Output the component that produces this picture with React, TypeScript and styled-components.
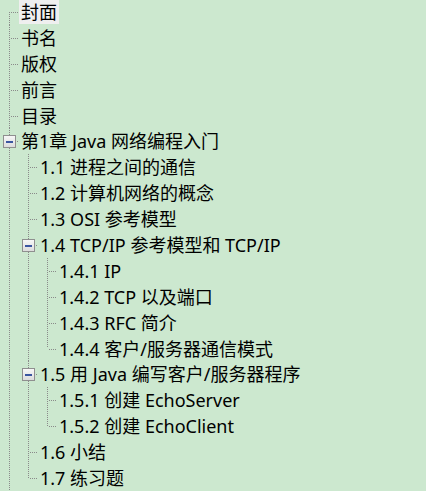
import React from 'react';
import styled, { createGlobalStyle, css } from 'styled-components';

interface TreeNode {
  label: string;
  selected?: boolean;
  children?: TreeNode[];
}

interface FlatRow {
  node: TreeNode;
  guides: boolean[];
  isRootFirst: boolean;
  isLast: boolean;
}

const TREE: TreeNode[] = [
  { label: '封面', selected: true },
  { label: '书名' },
  { label: '版权' },
  { label: '前言' },
  { label: '目录' },
  {
    label: '第1章 Java 网络编程入门',
    children: [
      { label: '1.1 进程之间的通信' },
      { label: '1.2 计算机网络的概念' },
      { label: '1.3 OSI 参考模型' },
      {
        label: '1.4 TCP/IP 参考模型和 TCP/IP',
        children: [
          { label: '1.4.1 IP' },
          { label: '1.4.2 TCP 以及端口' },
          { label: '1.4.3 RFC 简介' },
          { label: '1.4.4 客户/服务器通信模式' },
        ],
      },
      {
        label: '1.5 用 Java 编写客户/服务器程序',
        children: [
          { label: '1.5.1 创建 EchoServer' },
          { label: '1.5.2 创建 EchoClient' },
        ],
      },
      { label: '1.6 小结' },
      { label: '1.7 练习题' },
    ],
  },
];

// the top level list goes on below the visible part, so its line never ends
function flatten(
  nodes: TreeNode[],
  guides: boolean[],
  rootMore: boolean,
  out: FlatRow[] = [],
): FlatRow[] {
  nodes.forEach((node, i) => {
    const isLast = i === nodes.length - 1 && !(guides.length === 0 && rootMore);
    out.push({ node, guides, isRootFirst: guides.length === 0 && i === 0, isLast });
    if (node.children) {
      flatten(node.children, [...guides, !isLast], rootMore, out);
    }
  });
  return out;
}

const ROWS = flatten(TREE, [], true);

const LINE = '#8a8a8a';
const INDENT = 19;
const ROW_HEIGHT = 26;

const GlobalStyle = createGlobalStyle`
  html, body {
    margin: 0;
    padding: 0;
    background: #cce8cf;
    overflow: hidden;
  }
  body {
    font-family: "Noto Sans", "Noto Sans CJK SC", sans-serif;
  }
`;

const Tree = styled.div`
  display: flex;
  flex-direction: column;
  margin-top: -1px;
  width: 426px;
  height: 492px;
  background: #cce8cf;
`;

const Row = styled.div`
  display: flex;
  align-items: center;
  height: ${ROW_HEIGHT}px;
`;

const vDots = css`
  background-image: repeating-linear-gradient(
    to bottom,
    ${LINE} 0 1px,
    transparent 1px 2px
  );
`;

const Guide = styled.div<{ $line: boolean }>`
  position: relative;
  flex: 0 0 ${INDENT}px;
  align-self: stretch;

  &::before {
    content: '';
    display: ${(p) => (p.$line ? 'block' : 'none')};
    position: absolute;
    left: 9px;
    top: 0;
    bottom: 0;
    width: 1px;
    ${vDots}
  }
`;

const Connector = styled.div<{ $rootFirst: boolean; $last: boolean }>`
  position: relative;
  flex: 0 0 ${INDENT}px;
  align-self: stretch;

  &::before {
    content: '';
    position: absolute;
    left: 9px;
    top: ${(p) => (p.$rootFirst ? '13px' : '0')};
    bottom: ${(p) => (p.$last ? '13px' : '0')};
    width: 1px;
    ${vDots}
  }

  &::after {
    content: '';
    position: absolute;
    left: 11px;
    right: 0;
    top: 13px;
    height: 1px;
    background-image: repeating-linear-gradient(
      to right,
      ${LINE} 0 1px,
      transparent 1px 2px
    );
  }
`;

const Expander = styled.span`
  position: absolute;
  z-index: 1;
  left: 3px;
  top: 7px;
  width: 13px;
  height: 13px;
  box-sizing: border-box;
  border: 1px solid #8f8f8f;
  background: linear-gradient(#f7f7f7, #dcdcdc);
  display: flex;
  align-items: center;
  justify-content: center;

  &::before {
    content: '';
    width: 7px;
    height: 2px;
    background: #3a56a0;
  }
`;

const Label = styled.span<{ $selected?: boolean }>`
  padding: 0 2px;
  height: 24px;
  line-height: 24px;
  font-size: 18px;
  color: #000;
  white-space: nowrap;
  background: ${(p) => (p.$selected ? '#efefef' : 'transparent')};
`;

export default function App(): JSX.Element {
  return (
    <>
      <GlobalStyle />
      <Tree>
        {ROWS.map(({ node, guides, isRootFirst, isLast }) => (
          <Row key={node.label}>
            {guides.map((line, i) => (
              <Guide key={i} $line={line} />
            ))}
            <Connector $rootFirst={isRootFirst} $last={isLast}>
              {node.children && <Expander />}
            </Connector>
            <Label $selected={node.selected}>{node.label}</Label>
          </Row>
        ))}
      </Tree>
    </>
  );
}
